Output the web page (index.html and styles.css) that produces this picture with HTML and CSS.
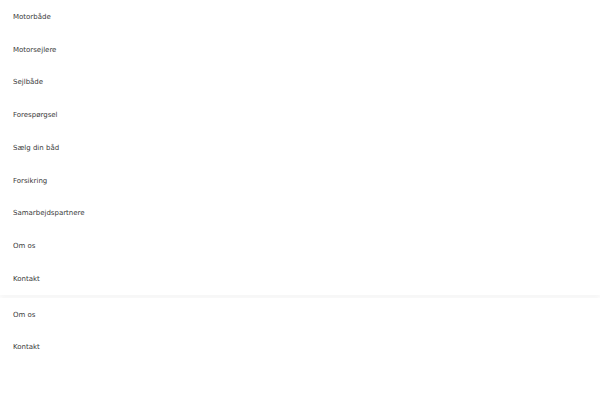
FILE: index.html
```html
<!DOCTYPE html>
<html lang="da">
<head>
    <meta charset="UTF-8">
    <meta name="viewport" content="width=device-width, initial-scale=1.0">
    <title>Menu</title>
    <link rel="stylesheet" href="styles.css">
</head>
<body>
    <ul class="menu">
        <li><a href="#">Motorbåde</a></li>
        <li><a href="#">Motorsejlere</a></li>
        <li><a href="#">Sejlbåde</a></li>
        <li><a href="#">Forespørgsel</a></li>
        <li><a href="#">Sælg din båd</a></li>
        <li><a href="#">Forsikring</a></li>
        <li><a href="#">Samarbejdspartnere</a></li>
        <li><a href="#">Om os</a></li>
        <li><a href="#">Kontakt</a></li>
    </ul>

    <ul class="menu menu-secondary">
        <li><a href="#">Om os</a></li>
        <li><a href="#">Kontakt</a></li>
    </ul>
</body>
</html>
```

FILE: styles.css
```css
body {
    margin: 0;
    font-family: "DejaVu Sans", sans-serif;
    background-color: #fff;
}
.menu {
    list-style: none;
    margin: 0;
    padding: 0;
    background-color: #fff;
    box-shadow: 0 2px 6px rgba(0, 0, 0, 0.05);
}
.menu-secondary {
    margin-top: 3px;
}
.menu li {
    height: 32.75px;
    display: flex;
    align-items: center;
    padding: 1px 0 0 13px;
    box-sizing: border-box;
}
.menu a {
    color: #3a3a3a;
    font-size: 7px;
    text-decoration: none;
}
```
